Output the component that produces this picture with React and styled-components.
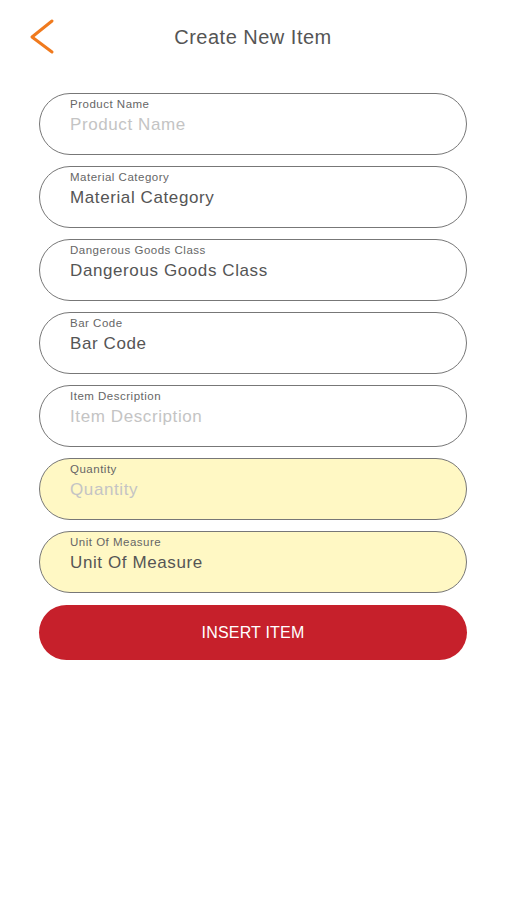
import React from 'react';
import styled, { createGlobalStyle } from 'styled-components';

const GlobalStyle = createGlobalStyle`
  html, body {
    margin: 0;
    padding: 0;
    background: #fff;
    font-family: "Liberation Sans", Arial, sans-serif;
  }
`;

const Screen = styled.div`
  width: 506px;
  min-height: 900px;
  background: #fff;
  box-sizing: border-box;
`;

const Header = styled.header`
  position: relative;
  height: 74px;
  display: flex;
  align-items: center;
  justify-content: center;
`;

const BackButton = styled.button`
  position: absolute;
  left: 26px;
  top: 17px;
  width: 32px;
  height: 40px;
  padding: 0;
  border: none;
  background: none;
  cursor: pointer;
`;

const Title = styled.h1`
  margin: 0;
  font-size: 20px;
  font-weight: normal;
  color: #555;
  letter-spacing: 0.5px;
`;

const Form = styled.form`
  display: flex;
  flex-direction: column;
  gap: 11px;
  padding: 19px 39px 0;
`;

const Field = styled.label`
  display: flex;
  flex-direction: column;
  height: 62px;
  box-sizing: border-box;
  padding: 3px 30px 0;
  border: 1px solid #777;
  border-radius: 31px;
  background: ${p => (p.$highlight ? '#fff8c4' : '#fff')};
`;

const FieldLabel = styled.span`
  font-size: 11.5px;
  color: #666;
  line-height: 14px;
  letter-spacing: 0.5px;
`;

const FieldInput = styled.input`
  border: none;
  outline: none;
  background: transparent;
  padding: 0;
  margin-top: 4px;
  font-family: inherit;
  font-size: 17px;
  line-height: 20px;
  letter-spacing: 0.6px;
  color: #555;
  &::placeholder {
    color: #c4c4c4;
  }
`;

const InsertButton = styled.button`
  margin-top: 1px;
  height: 55px;
  border: none;
  border-radius: 28px;
  background: #c6202b;
  color: #fff;
  font-family: inherit;
  font-size: 16px;
  letter-spacing: 0.2px;
  cursor: pointer;
`;

const fields = [
  { label: 'Product Name', placeholder: true },
  { label: 'Material Category' },
  { label: 'Dangerous Goods Class' },
  { label: 'Bar Code' },
  { label: 'Item Description', placeholder: true },
  { label: 'Quantity', placeholder: true, highlight: true },
  { label: 'Unit Of Measure', highlight: true },
];

export default function App() {
  return (
    <Screen>
      <GlobalStyle />
      <Header>
        <BackButton type="button" aria-label="Back">
          <svg width="32" height="40" viewBox="0 0 32 40">
            <path d="M26 4 L6 20 L26 35" fill="none" stroke="#f07a1e" strokeWidth="3" strokeLinecap="round" strokeLinejoin="round" />
          </svg>
        </BackButton>
        <Title>Create New Item</Title>
      </Header>
      <Form onSubmit={e => e.preventDefault()}>
        {fields.map(f => (
          <Field key={f.label} $highlight={f.highlight}>
            <FieldLabel>{f.label}</FieldLabel>
            {f.placeholder
              ? <FieldInput placeholder={f.label} />
              : <FieldInput defaultValue={f.label} />}
          </Field>
        ))}
        <InsertButton type="submit">INSERT ITEM</InsertButton>
      </Form>
    </Screen>
  );
}
